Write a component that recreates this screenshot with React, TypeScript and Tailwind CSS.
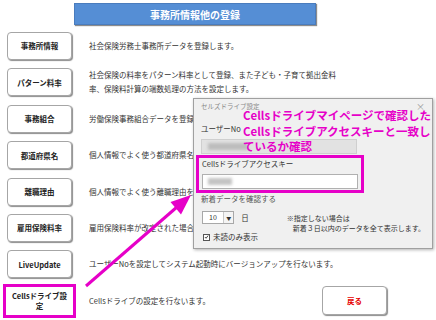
import React from 'react';

const MENU = [
  { label: '事務所情報', desc: ['社会保険労務士事務所データを登録します。'] },
  {
    label: 'パターン料率',
    desc: [
      '社会保険の料率をパターン料率として登録、また子ども・子育て拠出金料',
      '率、保険料計算の端数処理の方法を設定します。',
    ],
  },
  { label: '事務組合', desc: ['労働保険事務組合データを登録します。'] },
  { label: '都道府県名', desc: ['個人情報でよく使う都道府県名を登録します。'] },
  { label: '離職理由', desc: ['個人情報でよく使う離職理由を登録します。'] },
  { label: '雇用保険料率', desc: ['雇用保険料率が改定された場合に料率を変更します。'] },
  { label: 'LiveUpdate', desc: ['ユーザーNoを設定してシステム起動時にバージョンアップを行ないます。'] },
];

function MenuButton({ label }: { label: string }) {
  return (
    <div className="ml-[7px] w-[65px] h-[28px] shrink-0 flex items-center justify-center bg-white border border-[#a6a6a6] rounded-[4px] shadow-[1px_1px_1px_rgba(0,0,0,0.45)] text-[7.5px] font-bold text-[#222]">
      {label}
    </div>
  );
}

function CellsDialog() {
  return (
    <div className="absolute left-[193px] top-[98px] w-[240px] h-[151px] bg-[#f0f0f0] border border-[#a0a0a0] shadow-[1px_1px_3px_rgba(0,0,0,0.3)] px-[7px] text-[7.5px] text-[#333]">
      {/* title bar */}
      <div className="h-[15px] flex items-center justify-between">
        <span className="text-[6.5px] text-[#8a8a8a]">セルズドライブ設定</span>
        <span className="text-[9px] text-[#9a9a9a] leading-none">×</span>
      </div>

      <div className="mt-[10px] h-[10px] leading-[10px]">ユーザーNo</div>
      <div className="mt-[5px] w-[156px] h-[15px] bg-[#e2e2e2] border border-[#cfcfcf] flex items-center pl-[6px]">
        <div className="w-[40px] h-[7px] bg-[#bdbdbd] blur-[1.5px]" />
      </div>

      {/* highlighted access key */}
      <div className="relative z-10 mt-[1px] -ml-[5px] w-[168px] h-[38px] border-[3px] border-[#e600c8] pl-[3px] pt-[1px]">
        <div className="h-[10px] leading-[10px]">Cellsドライブアクセスキー</div>
        <div className="mt-[5px] w-[156px] h-[15px] bg-white border border-[#b0b0b0] flex items-center pl-[5px]">
          <div className="w-[24px] h-[7px] bg-[#c4c4c4] blur-[1.5px]" />
        </div>
      </div>

      <div className="mt-[1px] h-[10px] leading-[10px] text-[#555]">新着データを確認する</div>

      <div className="mt-[7px] h-[13px] flex items-start">
        <div className="ml-[1px] w-[37px] h-[13px] bg-white border border-[#a8a8a8] flex">
          <span className="flex-1 pl-[6px] leading-[11px] text-[7px]">10</span>
          <span className="w-[10px] border-l border-[#c8c8c8] bg-[#f4f4f4] flex items-center justify-center text-[5px] leading-none">▼</span>
        </div>
        <span className="ml-[7px] leading-[13px]">日</span>
        <div className="ml-[38px] mt-[2px] leading-[10px] whitespace-nowrap text-[7px]">
          <div>※指定しない場合は</div>
          <div className="pl-[6px]">新着３日以内のデータを全て表示します。</div>
        </div>
      </div>

      <div className="mt-[8px] h-[10px] flex items-center gap-[3px] pl-[2px]">
        <span className="w-[7px] h-[7px] bg-white border border-[#555] flex items-center justify-center">
          <svg width="6" height="6" viewBox="0 0 6 6">
            <path d="M1 3 L2.5 4.5 L5 1.2" stroke="#222" strokeWidth="1" fill="none" />
          </svg>
        </span>
        <span>未読のみ表示</span>
      </div>
    </div>
  );
}

export default function App() {
  return (
    <div className="relative w-[436px] h-[320px] bg-white overflow-hidden font-['Noto_Sans_CJK_JP',sans-serif]">
      {/* header */}
      <div className="ml-[74px] mt-[3px] w-[242px] h-[22px] bg-[#558ed5] border border-[#4a7cbd] shadow-[1px_1px_1px_rgba(0,0,0,0.45)] flex items-center justify-center text-white text-[10px] font-bold">
        事務所情報他の登録
      </div>

      {/* menu rows */}
      <div className="mt-[7px] flex flex-col gap-[8.4px]">
        {MENU.map((m) => (
          <div key={m.label} className="h-[28px] flex items-center">
            <MenuButton label={m.label} />
            <div className="ml-[17px] text-[7.5px] leading-[14px] text-[#333] whitespace-nowrap">
              {m.desc.map((d) => (
                <div key={d}>{d}</div>
              ))}
            </div>
          </div>
        ))}

        <div className="h-[28px] flex items-center">
          <div className="ml-[3px] w-[73px] h-[34px] shrink-0 border-[3px] border-[#e600c8] bg-white flex items-center justify-center text-center text-[7.5px] font-bold leading-[10px] text-[#222]">
            Cellsドライブ設
            <br />定
          </div>
          <div className="ml-[13px] flex-1 text-[7.5px] text-[#333] whitespace-nowrap">
            Cellsドライブの設定を行ないます。
          </div>
          <div className="mr-[49px] w-[65px] h-[29px] flex items-center justify-center bg-white border border-[#a6a6a6] rounded-[4px] shadow-[1px_1px_1px_rgba(0,0,0,0.45)] text-[7.5px] font-bold text-[#e60000]">
            戻る
          </div>
        </div>
      </div>

      <CellsDialog />

      {/* annotation */}
      <div className="absolute left-[243px] top-[108px] text-[11.5px] font-bold leading-[15.5px] text-[#e600c8] whitespace-nowrap">
        Cellsドライブマイページで確認した
        <br />
        Cellsドライブアクセスキーと一致し
        <br />
        ているか確認
      </div>

      <svg className="absolute inset-0 pointer-events-none" width="436" height="320" viewBox="0 0 436 320">
        <line x1="86" y1="286" x2="177" y2="207" stroke="#e600c8" strokeWidth="3" />
        <polygon points="191,195 181,214.5 170.5,202" fill="#e600c8" />
      </svg>
    </div>
  );
}
